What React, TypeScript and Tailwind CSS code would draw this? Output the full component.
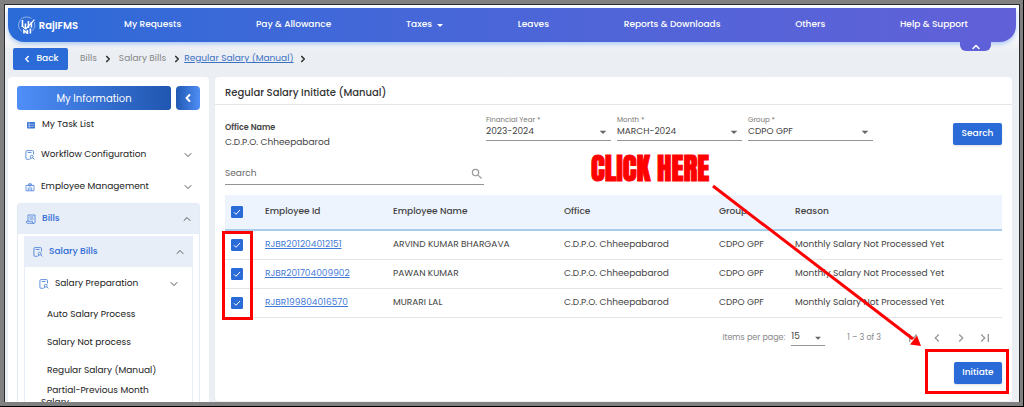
import { useId, useState } from "react";
import type { ReactNode } from "react";
import { ChevronDown, ChevronLeft, ChevronRight, ChevronUp } from "lucide-react";
import { MdArrowDropDown, MdChevronLeft, MdChevronRight, MdFirstPage, MdLastPage, MdSearch } from "react-icons/md";
import { clsx } from "clsx";

const NAV_LINKS = [
  { label: "My Requests" },
  { label: "Pay & Allowance" },
  { label: "Taxes", menu: true },
  { label: "Leaves" },
  { label: "Reports & Downloads" },
  { label: "Others" },
  { label: "Help & Support" },
];

const EMPLOYEES = [
  { id: "RJBR201204012151", name: "ARVIND KUMAR BHARGAVA" },
  { id: "RJBR201704009902", name: "PAWAN KUMAR" },
  { id: "RJBR199804016570", name: "MURARI LAL" },
];

const Logo = () => (
  <svg viewBox="0 0 18 18" className="size-[18px]" fill="none" stroke="currentColor" aria-hidden>
    <path d="M4 15.500A8 8 0 0 1 9 1a8 8 0 0 1 4.500 1.300M16.500 6a8 8 0 0 1-2 8.800" strokeWidth=".6" opacity=".8" />
    <path d="M4.500 4v7M7.500 7.500v5M10.500 5v7M13.500 6v5.500" strokeWidth="1.600" />
    <path d="M3.800 10l4.200 3L16.500 3.500" strokeWidth="1.200" />
    <path d="M6 17.500v-3l3.500 3v-3.500M12.500 17.500v-5" strokeWidth="1.600" />
  </svg>
);

const ListIcon = () => (
  <svg viewBox="0 0 10 10" className="size-2.5" aria-hidden>
    <rect x="1" y="2" width="8" height="6.5" rx=".8" fill="#3b73d3" />
    <path d="M1.500 4.200h7M1.500 6.300h7M3.300 2.400v5.700" stroke="#c3d6f5" strokeWidth=".6" />
  </svg>
);

const DocSearchIcon = () => (
  <svg viewBox="0 0 10 10" className="size-2.5" fill="none" stroke="#3f78d6" strokeWidth=".8" aria-hidden>
    <path d="M4.500 9.300H2A1.100 1.100 0 0 1 .9 8.200V1.600A1.100 1.100 0 0 1 2 .6h5.500a1 1 0 0 1 1 1V4.500M2.700 2.500h3.800" />
    <circle cx="6.700" cy="6.700" r="1.400" />
    <path d="M5.800 7.800 5 9.300M7.700 7.700l1.700 1.700" />
  </svg>
);

const BriefcaseIcon = () => (
  <svg viewBox="0 0 10 10" className="size-2.5" fill="none" stroke="#4a80da" strokeWidth=".8" aria-hidden>
    <path d="M1 3.500h8v5.300H1zM3.300 3.500V2h3.400v1.500M3.300 8.800V5.500M6.700 8.800V5.500M5 1v7" />
  </svg>
);

const BillIcon = () => (
  <svg viewBox="0 0 10 10" className="size-2.5" fill="none" stroke="#3f78d6" strokeWidth=".8" aria-hidden>
    <path d="M2 7V1h7v7.300a1 1 0 0 1-1 1H1.500a1 1 0 0 1-1-1V7.300h6v1a1 1 0 0 0 1.500 1M3.500 3h4M3.500 5h4" />
  </svg>
);

type MenuRowProps = {
  icon: ReactNode;
  label: string;
  open?: boolean;
  leaf?: boolean;
  className?: string;
};

const MenuRow = ({ icon, label, open, leaf, className }: MenuRowProps) => (
  <button
    type="button"
    aria-expanded={leaf ? undefined : !!open}
    className={clsx(
      "flex w-full items-center gap-1.5 text-left text-[9px]",
      open ? "bg-[#e8eef8] font-medium text-[#2f6bd4]" : "text-[#222]",
      className
    )}
  >
    {icon}
    <span className="flex-1">{label}</span>
    {!leaf &&
      (open ? <ChevronUp className="-mr-0.5 size-3 text-[#555]" /> : <ChevronDown className="-mr-0.5 size-3 text-[#555]" />)}
  </button>
);

const SelectField = ({ label, value }: { label: string; value: string }) => {
  const id = useId();
  return (
    <div className="relative w-[125px] border-b border-[#949494]">
      <label htmlFor={id} className="block text-[7px] leading-[9px] text-[#777]">
        {label}
      </label>
      <select id={id} className="block h-4 w-full appearance-none bg-transparent text-[9px] text-[#444]">
        <option>{value}</option>
      </select>
      <MdArrowDropDown className="pointer-events-none absolute right-0 bottom-0 size-4 text-[#666]" />
    </div>
  );
};

type CheckBoxProps = { label: string; checked: boolean; onChange: () => void };

const CheckBox = ({ label, checked, onChange }: CheckBoxProps) => (
  <label className="ml-1.5 grid size-3">
    <input
      type="checkbox"
      aria-label={label}
      checked={checked}
      onChange={onChange}
      className="col-start-1 row-start-1 size-3 appearance-none rounded-[1px] border border-[#2a6bd8] checked:bg-[#2a6bd8]"
    />
    {checked && (
      <svg viewBox="0 0 12 12" className="pointer-events-none col-start-1 row-start-1 size-3" aria-hidden>
        <path d="M3 6.300l2 2 4-4.300" fill="none" stroke="#fff" strokeWidth="1" />
      </svg>
    )}
  </label>
);

const TopNav = () => (
  <header className="relative shrink-0 px-[3px] pt-[3px]">
    <nav className="flex h-[34px] items-center rounded-b-2xl bg-linear-to-r from-[#2a6bd8] to-[#6160d8] pr-12 pl-2.5 text-white shadow-[0_2px_4px_#a9c8f5]">
      <a href="#" className="flex w-[60px] items-center gap-[3px] text-[10px] font-semibold">
        <Logo />
        RajIFMS
      </a>
      <ul className="ml-[46px] flex flex-1 items-center justify-between text-[9px] font-medium">
        {NAV_LINKS.map((link) => (
          <li key={link.label}>
            <a href="#" className="flex items-center gap-1">
              {link.label}
              {link.menu && <span className="ml-px border-x-3 border-t-3 border-x-transparent" />}
            </a>
          </li>
        ))}
      </ul>
    </nav>
    <button
      type="button"
      aria-label="Collapse menu"
      className="absolute top-full right-7 flex h-[9px] w-[31px] items-center justify-center rounded-b-md bg-[#5d60d8] text-white"
    >
      <ChevronUp className="size-3" strokeWidth={3} />
    </button>
  </header>
);

const Breadcrumb = () => (
  <div className="flex items-center gap-3 px-2 pt-1.5 pb-[7px]">
    <button
      type="button"
      className="flex h-[22px] w-[55px] items-center justify-center gap-1 rounded-[2px] bg-[#2a6bd8] text-[9px] font-medium text-white"
    >
      <ChevronLeft className="size-2.5" strokeWidth={3.5} />
      Back
    </button>
    <ol className="flex items-center gap-1.5 text-[9px] text-[#888]">
      <li className="flex items-center gap-1.5">
        Bills
        <ChevronRight className="size-2.5 text-[#333]" strokeWidth={4} />
      </li>
      <li className="flex items-center gap-1.5">
        Salary Bills
        <ChevronRight className="size-2.5 text-[#333]" strokeWidth={4} />
      </li>
      <li className="-ml-1 flex items-center gap-1">
        <a href="#" className="text-[#3c72c4] underline">
          Regular Salary (Manual)
        </a>
        <ChevronRight className="size-2.5 text-[#333]" strokeWidth={4} />
      </li>
    </ol>
  </div>
);

const Sidebar = () => (
  <aside className="w-[201px] shrink-0 overflow-hidden rounded-t-sm bg-white px-[9px] pt-[9px]">
    <div className="flex gap-[5px] text-white">
      <h2 className="flex h-6 flex-1 items-center justify-center rounded-[3px] bg-linear-to-r from-[#4f8ff8] to-[#1f56b0] text-[10px]">
        My Information
      </h2>
      <button
        type="button"
        aria-label="Hide sidebar"
        className="flex size-6 items-center justify-center rounded-[4px] bg-linear-to-r from-[#2259b4] to-[#4f8ff5]"
      >
        <ChevronLeft className="size-3" strokeWidth={4} />
      </button>
    </div>
    <MenuRow icon={<ListIcon />} label="My Task List" leaf className="h-[30px] px-[9px]" />
    <MenuRow icon={<DocSearchIcon />} label="Workflow Configuration" className="h-[30px] px-2" />
    <MenuRow icon={<BriefcaseIcon />} label="Employee Management" className="h-[33px] px-2" />
    <div className="rounded-t-[3px] border border-[#e3ebf7]">
      <MenuRow icon={<BillIcon />} label="Bills" open className="h-[30px] px-2" />
      <div className="mx-1.5 mt-0.5 border-x border-[#e8eef8]">
        <MenuRow icon={<DocSearchIcon />} label="Salary Bills" open className="h-[31px] px-2" />
        <MenuRow icon={<DocSearchIcon />} label="Salary Preparation" className="h-[33px] px-3.5" />
        <ul className="pr-4 pl-[22px] text-[9px] leading-7 text-[#222]">
          <li>
            <a href="#">Auto Salary Process</a>
          </li>
          <li>
            <a href="#">Salary Not process</a>
          </li>
          <li>
            <a href="#">Regular Salary (Manual)</a>
          </li>
          <li className="-ml-1.5 max-w-[120px] indent-1.5 leading-3">
            <a href="#">Partial-Previous Month Salary</a>
          </li>
        </ul>
      </div>
    </div>
  </aside>
);

const EmployeeTable = () => {
  const [selected, setSelected] = useState(EMPLOYEES.map((e) => e.id));
  const allSelected = selected.length === EMPLOYEES.length;

  const toggle = (id: string) =>
    setSelected(selected.includes(id) ? selected.filter((s) => s !== id) : [...selected, id]);

  return (
    <table className="mt-[10px] w-full table-fixed text-left text-[9px] text-[#444]">
      <thead className="bg-[#edf4fe]">
        <tr className="h-[35px] border-b-2 border-[#a9cde8]">
          <th className="w-10">
            <CheckBox
              label="Select all"
              checked={allSelected}
              onChange={() => setSelected(allSelected ? [] : EMPLOYEES.map((e) => e.id))}
            />
          </th>
          <th className="w-32 font-medium">Employee Id</th>
          <th className="w-[171px] font-medium">Employee Name</th>
          <th className="w-[155px] font-medium">Office</th>
          <th className="w-[76px] font-medium">Group</th>
          <th className="font-medium">Reason</th>
        </tr>
      </thead>
      <tbody>
        {EMPLOYEES.map((employee) => (
          <tr key={employee.id} className="h-[29px] border-b border-[#e4e4e4]">
            <td>
              <CheckBox
                label={`Select ${employee.name}`}
                checked={selected.includes(employee.id)}
                onChange={() => toggle(employee.id)}
              />
            </td>
            <td>
              <a href="#" className="text-[#3f7ad8] underline">
                {employee.id}
              </a>
            </td>
            <td>{employee.name}</td>
            <td>C.D.P.O. Chheepabarod</td>
            <td>CDPO GPF</td>
            <td>Monthly Salary Not Processed Yet</td>
          </tr>
        ))}
      </tbody>
    </table>
  );
};

const Paginator = () => (
  <div className="mt-2 flex h-6 items-center justify-end pr-[9px] text-[8px] text-[#888]">
    <label htmlFor="page-size">Items per page:</label>
    <div className="relative ml-1.5 w-[34px] border-b border-[#949494]">
      <select id="page-size" className="block h-4 w-full appearance-none bg-transparent text-[9px] text-[#444]">
        <option>15</option>
      </select>
      <MdArrowDropDown className="pointer-events-none absolute right-0 bottom-0 size-3.5 text-[#666]" />
    </div>
    <span className="mr-6 ml-[22px]">1 – 3 of 3</span>
    <div className="flex gap-2 text-[#999]">
      <button type="button" aria-label="First page">
        <MdFirstPage className="size-4" />
      </button>
      <button type="button" aria-label="Previous page">
        <MdChevronLeft className="size-4" />
      </button>
      <button type="button" aria-label="Next page">
        <MdChevronRight className="size-4" />
      </button>
      <button type="button" aria-label="Last page">
        <MdLastPage className="size-4" />
      </button>
    </div>
  </div>
);

// Red call-outs drawn over the page
const Annotations = () => (
  <div className="pointer-events-none absolute inset-0 text-[#fe0000]">
    <div className="absolute top-[154px] left-[7px] h-[89px] w-[31px] border-3" />
    <div className="absolute top-[272px] right-[3px] h-[45px] w-[84px] border-3" />
    <p className="absolute top-[76px] left-[376px] font-['Impact','Anton','League_Gothic','Oswald','Liberation_Sans',sans-serif] text-[29px] leading-8 whitespace-nowrap [-webkit-text-stroke:1px_#fe0000]">
      CLICK HERE
    </p>
    <svg viewBox="0 0 212 164" className="absolute top-[107px] right-[89px] h-[164px] w-[212px]" aria-hidden>
      <path d="M2 2l200 153" stroke="currentColor" strokeWidth="3" />
      <path d="M210 162l-11-1.500 7-9z" fill="currentColor" />
    </svg>
  </div>
);

const SalaryPanel = () => (
  <main className="relative mb-px min-w-0 flex-1 rounded-sm bg-white text-[#444]">
    <h1 className="border-b border-[#e6e6e6] px-2.5 pt-2 pb-[3px] text-[10px] leading-4 font-medium text-[#333]">
      Regular Salary Initiate (Manual)
    </h1>
    <div className="px-2.5">
      <div className="flex h-[49px] items-start pt-[10px]">
        <div className="w-[261px] pt-1.5 text-[9px] leading-[14px]">
          <p className="text-[8px] font-semibold">Office Name</p>
          <p>C.D.P.O. Chheepabarod</p>
        </div>
        <div className="flex gap-1.5">
          <SelectField label="Financial Year *" value="2023-2024" />
          <SelectField label="Month *" value="MARCH-2024" />
          <SelectField label="Group *" value="CDPO GPF" />
        </div>
        <button
          type="button"
          className="mt-2 ml-auto h-[22px] w-[49px] rounded-[2px] bg-[#2a6bd8] text-[9px] font-medium text-white shadow-sm"
        >
          Search
        </button>
      </div>
      <div className="mt-2.5 flex h-[21px] w-[259px] items-center border-b border-[#949494]">
        <input
          type="text"
          aria-label="Search employees"
          placeholder="Search"
          className="min-w-0 flex-1 text-[9px] outline-none placeholder:text-[#666]"
        />
        <MdSearch className="size-3.5 text-[#999]" />
      </div>
      <EmployeeTable />
      <Paginator />
      <div className="mt-3 flex justify-end">
        <button
          type="button"
          className="h-[22px] w-12 rounded-[2px] bg-[#2a6bd8] text-[9px] font-medium text-white shadow-sm"
        >
          Initiate
        </button>
      </div>
    </div>
    <Annotations />
  </main>
);

export default function App() {
  return (
    <div className="h-screen border-r border-b border-black bg-[#808080] pt-1 pr-[3px] pb-1 pl-1 font-['Poppins','Inter',sans-serif]">
      <div className="flex h-full flex-col overflow-hidden border border-b-0 border-[#2c2c30] bg-linear-to-b from-white from-5% to-[#ebeef2] to-12%">
        <TopNav />
        <Breadcrumb />
        <div className="flex min-h-0 flex-1 gap-1.5 pr-[7px] pl-[3px]">
          <Sidebar />
          <SalaryPanel />
        </div>
      </div>
    </div>
  );
}
